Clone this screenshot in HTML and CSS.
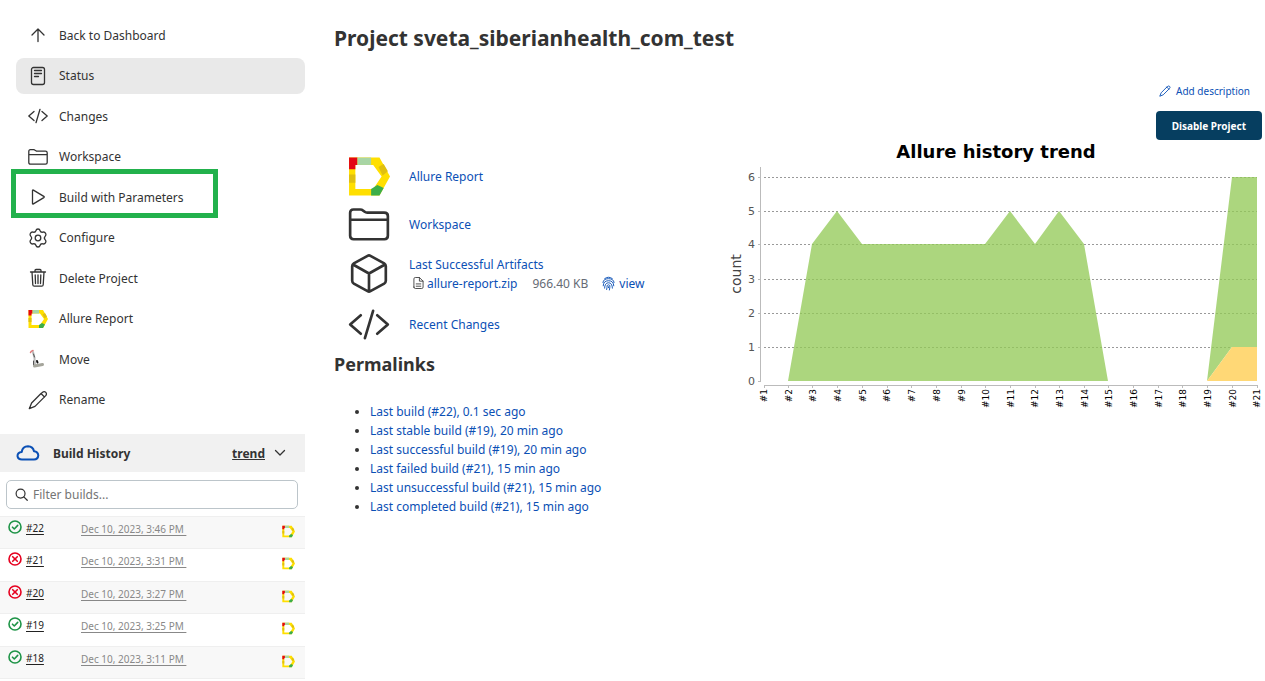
FILE: index.html
```html
<!DOCTYPE html>
<html lang="en">
<head>
<meta charset="utf-8">
<title>sveta_siberianhealth_com_test [Jenkins]</title>
<link rel="stylesheet" href="styles.css">
</head>
<body>
<svg class="defs" aria-hidden="true">
  <symbol id="up" viewBox="0 0 20 20"><path d="M10 16.500V4M4 10 10 4 16 10"/></symbol>
  <symbol id="doc" viewBox="0 0 20 20"><rect x="3.500" y="1.500" width="13" height="17" rx="2"/><path d="M6.500 4.500h7M6.500 7.500h7M6.500 10.500h4"/></symbol>
  <symbol id="code" viewBox="0 0 20 20"><path d="M6 5.500.800 10 6 14.500M14 5.500l5.200 4.500-5.200 4.500M12 3.300 8 16.700"/></symbol>
  <symbol id="folder" viewBox="0 0 20 20"><path d="M.800 15.500V4.300Q.800 2.700 2.400 2.700h3.300q.8 0 1.400.5l.8.600q.5.400 1.200.4h8.300q1.800 0 1.800 1.600v9.700q0 1.700-1.700 1.700H2.500q-1.700 0-1.700-1.700zM.800 7.700h18.400"/></symbol>
  <symbol id="play" viewBox="0 0 20 20"><path d="M4.500 3.600v12.800q0 1 .9.500l10.400-6.300q.9-.6 0-1.200L5.400 3.100q-.9-.5-.9.500z"/></symbol>
  <symbol id="gear" viewBox="0 0 20 20"><circle cx="10" cy="10" r="2.800"/><path d="M8 2.500Q8.300 1 10 1t2 1.500q.7 2.200 3 1.600 1.600-.4 2.600 1.200.9 1.800-.3 2.800-1.900 1.900 0 3.800 1.200 1 .3 2.800-1 1.600-2.600 1.200-2.300-.6-3 1.600Q11.700 19 10 19t-2-1.500q-.7-2.200-3-1.600-1.600.4-2.600-1.200-.9-1.800.3-2.800 1.900-1.900 0-3.800-1.200-1-.3-2.800 1-1.600 2.600-1.200 2.300.6 3-1.600z"/></symbol>
  <symbol id="trash" viewBox="0 0 20 20"><path d="M2.500 4h15M4 4l.8 12.700q.1 1.500 1.500 1.500h7.400q1.400 0 1.500-1.500L16 4M7 4V2.500q0-1 1-1h4q1 0 1 1V4M7.200 7l.3 8.500M10 7v8.500M12.800 7l-.3 8.500"/></symbol>
  <symbol id="pencil" viewBox="0 0 20 20"><path d="M13 3.500 3.600 13 1.300 18.700 7 16.400 17.500 5.900q1.700-1.900.3-3.500-1.600-1.500-3.500.1L13 3.500zM13 3.500 16.500 7"/></symbol>
  <symbol id="cube" viewBox="0 0 20 20"><path d="M9.300 1.400q.7-.4 1.400 0l6.700 3.700q.8.500.8 1.400v7q0 .9-.8 1.400l-6.700 3.700q-.7.400-1.400 0l-6.700-3.700q-.8-.5-.8-1.400v-7q0-.9.8-1.400zM2.200 5.600 10 10l7.800-4.400M10 10v8.700"/></symbol>
  <symbol id="cloud" viewBox="0 0 24 18"><path d="M6 15.500q-4 0-4.500-3.500 0-3.600 4.200-4Q6.500 2.500 12 2.300q5 .2 6 5 4 .3 4.300 4.100-.3 4-4.300 4.100z"/></symbol>
  <symbol id="search" viewBox="0 0 14 14"><circle cx="6" cy="6" r="4.800"/><path d="m9.500 9.500 3.700 3.700"/></symbol>
  <symbol id="page" viewBox="0 0 12 14"><path d="M1 11.500v-9Q1 1 2.500 1H7l4 4v6.500q0 1.500-1.500 1.500h-7Q1 13 1 11.500zM7 1v4h4M3.500 8h5M3.500 10.500h5"/></symbol>
  <symbol id="print" viewBox="0 0 14 16"><path d="M2.800 2.800Q7-.5 11.200 2.800M1 7q.5-4.200 6-4.200T13 7M1.300 10.500Q1.500 5 7 5t5.700 5.500M2.800 13Q3 7.200 7 7.200t4.200 5.800M5 14.500q.5-2 .5-4Q5.800 9.400 7 9.400t1.500 1.100q0 2-.5 4.500M7 11.500v1"/></symbol>
  <symbol id="ok" viewBox="0 0 14 14"><circle cx="7" cy="7" r="6"/><path d="m4.500 7.200 1.800 1.800 3.400-3.600"/></symbol>
  <symbol id="bad" viewBox="0 0 14 14"><circle cx="7" cy="7" r="6"/><path d="m4.700 4.700 4.600 4.600m0-4.600L4.700 9.300"/></symbol>
  <symbol id="allure" viewBox="0 0 40 38">
    <path fill="#ffdf00" stroke="none" d="M1 1h29l10 18-10 18H1zM7 8v23h17l8-12-8-11z" fill-rule="evenodd"/>
    <path fill="#e30613" stroke="none" d="M1 1h8v7H7v4H1z"/><path fill="#a8d5a5" stroke="none" d="M9 1h13v7H9z"/>
    <path fill="#e0c010" stroke="none" d="M1 17h6v8H1zM29 10l5-3 4 7-5 4z"/><path fill="#3cae49" stroke="none" d="M22 31l6-4 6 3-4 7h-8z"/>
  </symbol>
  <symbol id="mover" viewBox="0 0 20 20">
    <path stroke="#bbb" stroke-width="2" d="M5 3 6.500 9l.5 7"/><path stroke="#555" stroke-width="1" d="m5.500 5 1 3M5.500 12v4"/>
    <path stroke="#d77" stroke-width="1.500" d="M2.500 3.500Q3 2 5 1.500"/><path stroke="#a5a59c" stroke-width="3" d="m6.500 17 8-1.500"/><path stroke="#111" stroke-width="2" d="m9 12 .5 1.500"/>
  </symbol>
</svg>
<div class="page">
  <aside class="side">
    <nav class="tasks">
      <a class="task" href="#"><svg class="icon"><use href="#up"/></svg>Back to Dashboard</a>
      <a class="task task-active" href="#"><svg class="icon"><use href="#doc"/></svg>Status</a>
      <a class="task" href="#"><svg class="icon"><use href="#code"/></svg>Changes</a>
      <a class="task" href="#"><svg class="icon"><use href="#folder"/></svg>Workspace</a>
      <a class="task task-marked" href="#"><svg class="icon"><use href="#play"/></svg>Build with Parameters</a>
      <a class="task" href="#"><svg class="icon"><use href="#gear"/></svg>Configure</a>
      <a class="task" href="#"><svg class="icon"><use href="#trash"/></svg>Delete Project</a>
      <a class="task" href="#"><svg class="icon"><use href="#allure"/></svg>Allure Report</a>
      <a class="task" href="#"><svg class="icon"><use href="#mover"/></svg>Move</a>
      <a class="task" href="#"><svg class="icon"><use href="#pencil"/></svg>Rename</a>
    </nav>
    <section class="history">
      <header class="history-head">
        <svg class="cloud"><use href="#cloud"/></svg>
        <h2 class="history-title">Build History</h2>
        <a class="trend" href="#">trend</a>
        <svg class="chevron" viewBox="0 0 10 6"><path d="m.500.500 4.500 4.500L9.500.500"/></svg>
      </header>
      <label class="filter"><svg class="filter-icon"><use href="#search"/></svg><input class="filter-input" type="text" placeholder="Filter builds..." aria-label="Filter builds"></label>
      <table class="builds">
        <tr><td class="build-no"><svg class="state ok"><use href="#ok"/></svg><a href="#">#22</a></td><td class="build-date"><a href="#">Dec 10, 2023, 3:46 PM&nbsp;</a></td><td class="build-report"><svg class="mini"><use href="#allure"/></svg></td></tr>
        <tr><td class="build-no"><svg class="state bad"><use href="#bad"/></svg><a href="#">#21</a></td><td class="build-date"><a href="#">Dec 10, 2023, 3:31 PM&nbsp;</a></td><td class="build-report"><svg class="mini"><use href="#allure"/></svg></td></tr>
        <tr><td class="build-no"><svg class="state bad"><use href="#bad"/></svg><a href="#">#20</a></td><td class="build-date"><a href="#">Dec 10, 2023, 3:27 PM&nbsp;</a></td><td class="build-report"><svg class="mini"><use href="#allure"/></svg></td></tr>
        <tr><td class="build-no"><svg class="state ok"><use href="#ok"/></svg><a href="#">#19</a></td><td class="build-date"><a href="#">Dec 10, 2023, 3:25 PM&nbsp;</a></td><td class="build-report"><svg class="mini"><use href="#allure"/></svg></td></tr>
        <tr><td class="build-no"><svg class="state ok"><use href="#ok"/></svg><a href="#">#18</a></td><td class="build-date"><a href="#">Dec 10, 2023, 3:11 PM&nbsp;</a></td><td class="build-report"><svg class="mini"><use href="#allure"/></svg></td></tr>
      </table>
    </section>
  </aside>
  <main class="main">
    <h1 class="title">Project sveta_siberianhealth_com_test</h1>
    <div class="columns">
      <div class="content">
        <div class="row"><svg class="big"><use href="#allure"/></svg><a href="#">Allure Report</a></div>
        <div class="row"><svg class="big"><use href="#folder"/></svg><a href="#">Workspace</a></div>
        <div class="row row-tall"><svg class="big"><use href="#cube"/></svg>
          <div class="artifacts"><a href="#">Last Successful Artifacts</a>
            <div class="files"><a class="file" href="#"><svg class="page-icon"><use href="#page"/></svg>allure-report.zip</a><span class="size">966.40 KB</span><a class="view" href="#"><svg class="print"><use href="#print"/></svg>view</a></div>
          </div></div>
        <div class="row row-tall"><svg class="big"><use href="#code"/></svg><a href="#">Recent Changes</a></div>
        <h2 class="subtitle">Permalinks</h2>
        <ul class="links">
          <li><a href="#">Last build (#22), 0.1 sec ago</a></li>
          <li><a href="#">Last stable build (#19), 20 min ago</a></li>
          <li><a href="#">Last successful build (#19), 20 min ago</a></li>
          <li><a href="#">Last failed build (#21), 15 min ago</a></li>
          <li><a href="#">Last unsuccessful build (#21), 15 min ago</a></li>
          <li><a href="#">Last completed build (#21), 15 min ago</a></li>
        </ul>
      </div>
      <div class="aside">
        <a class="describe" href="#"><svg class="describe-icon"><use href="#pencil"/></svg>Add description</a>
        <button class="disable" type="button">Disable Project</button>
        <svg class="chart" viewBox="0 0 532 270" role="img" aria-label="Allure history trend">
          <text class="chart-title" x="266" y="18" text-anchor="middle">Allure history trend</text>
          <path class="grid-lines" d="M34 37.500H527M34 71.500H527M34 104.500H527M34 139.500H527M34 173.500H527M34 207.500H527"/>
          <path fill="#92c956" fill-opacity=".76" d="M58 241 82 104 107 71 132 104H255L280 71 305 104 329 71 354 104 378 241zM477 241 502 37H527V207H502z"/>
          <path fill="#ffd876" d="M477 241 502 207H527V241z"/>
          <path class="axis" d="M30.500 27V241.500M28 37.500h3M28 71.500h3M28 104.500h3M28 139.500h3M28 173.500h3M28 207.500h3M28 241.500h3M34 245.500H527M34.500 245v3M58.500 245v3M82.500 245v3M107.500 245v3M132.500 245v3M157.500 245v3M181.500 245v3M206.500 245v3M231.500 245v3M255.500 245v3M280.500 245v3M305.500 245v3M329.500 245v3M354.500 245v3M378.500 245v3M403.500 245v3M428.500 245v3M452.500 245v3M477.500 245v3M502.500 245v3M527.500 245v3"/>
          <g class="y-labels"><text x="25" y="41">6</text><text x="25" y="75">5</text><text x="25" y="108">4</text><text x="25" y="143">3</text><text x="25" y="177">2</text><text x="25" y="211">1</text><text x="25" y="245">0</text></g>
          <text class="count" transform="translate(11 134) rotate(-90)">count</text>
          <g class="x-labels">
            <text transform="translate(37 249) rotate(-90)">#1</text><text transform="translate(62 249) rotate(-90)">#2</text><text transform="translate(86 249) rotate(-90)">#3</text><text transform="translate(111 249) rotate(-90)">#4</text><text transform="translate(136 249) rotate(-90)">#5</text><text transform="translate(160 249) rotate(-90)">#6</text><text transform="translate(185 249) rotate(-90)">#7</text><text transform="translate(210 249) rotate(-90)">#8</text><text transform="translate(235 249) rotate(-90)">#9</text><text transform="translate(259 249) rotate(-90)">#10</text><text transform="translate(284 249) rotate(-90)">#11</text><text transform="translate(308 249) rotate(-90)">#12</text><text transform="translate(333 249) rotate(-90)">#13</text><text transform="translate(358 249) rotate(-90)">#14</text><text transform="translate(382 249) rotate(-90)">#15</text><text transform="translate(407 249) rotate(-90)">#16</text><text transform="translate(432 249) rotate(-90)">#17</text><text transform="translate(456 249) rotate(-90)">#18</text><text transform="translate(481 249) rotate(-90)">#19</text><text transform="translate(506 249) rotate(-90)">#20</text><text transform="translate(530 249) rotate(-90)">#21</text>
          </g>
        </svg>
      </div>
    </div>
  </main>
</div>
</body>
</html>
```
FILE: styles.css
```css
*, *::after { box-sizing: border-box; }
body { margin: 0; background: #fff; color: #333; font: 12px/19px "Noto Sans", "Open Sans", sans-serif; }
a { color: #0b50b5; text-decoration: none; }
svg { fill: none; stroke: currentColor; stroke-linecap: round; stroke-linejoin: round; flex: none; }
.defs { display: none; }
.page { display: flex; align-items: flex-start; }

.side { width: 305px; flex: none; }
.tasks { display: flex; flex-direction: column; justify-content: space-between; min-height: 418px; padding: 17px 0 0 16px; }
.task { position: relative; display: flex; align-items: center; gap: 11px; height: 36px; padding-left: 12px; border-radius: 8px; color: #333; }
.task-active { background: #e9e9e9; }
.task-marked::after { content: ""; position: absolute; top: -10px; left: -5px; width: 207px; height: 49px; border: 5px solid #22b14c; }
.icon { width: 20px; height: 20px; stroke-width: 1.300px; }

.history { margin-top: 16px; }
.history-head { display: flex; align-items: center; height: 38px; padding: 0 20px 0 16px; background: #f1f1f1; }
.cloud { width: 24px; height: 18px; margin-right: 13px; color: #0b50b5; stroke-width: 2px; }
.history-title { flex: 1; margin: 0; font-size: 12px; }
.trend { margin-right: 10px; color: #333; font-weight: 700; text-decoration: underline; }
.chevron { width: 10px; height: 6px; stroke-width: 1.300px; overflow: visible; }
.filter { display: flex; align-items: center; gap: 5px; height: 29px; margin: 8px 7px 7px 6px; padding: 0 8px; border: 1px solid #bcc5ca; border-radius: 5px; }
.filter-icon { width: 13px; height: 13px; stroke-width: 1.300px; }
.filter-input { flex: 1; min-width: 0; padding: 0; border: 0; outline: 0; background: none; color: #333; font: inherit; }
.filter-input::placeholder { color: #757575; }
.builds { width: 100%; height: 163px; border-collapse: collapse; font-size: 10px; line-height: 16px; }
.builds tr { border-top: 1px solid #efefef; border-bottom: 1px solid #efefef; }
.builds tr:nth-child(odd) { background: #f8f8f8; }
.builds td { padding: 3px 0 0; vertical-align: top; }
.builds a { text-decoration: underline; text-underline-offset: 2px; }
.build-no { width: 81px; }
.build-no a { color: #222; vertical-align: top; }
.state { width: 14px; height: 14px; margin: 0 4px 0 8px; stroke-width: 1.600px; }
.ok { color: #1e9447; }
.bad { color: #e6001f; }
.builds .build-date { padding-top: 4px; }
.build-date a { color: #888; }
.builds .build-report { padding: 8px 10px 0 0; text-align: right; }
.mini { width: 13px; height: 13px; }

.main { flex: 1; min-width: 0; padding: 23px 3px 0 29px; }
.title { margin: 0; font-size: 21px; line-height: 30px; }
.columns { display: flex; justify-content: space-between; padding-top: 29px; }
.content { padding-top: 70px; }
.row { display: flex; align-items: center; gap: 19px; height: 48px; padding-left: 14px; }
.row-tall { height: 51px; }
.big { width: 42px; height: 41px; stroke-width: 1.300px; }
.files { display: flex; align-items: center; padding-left: 4px; }
.file { display: flex; align-items: center; gap: 3px; }
.page-icon { width: 11px; height: 14px; color: #444; }
.size { margin: 0 14px 0 15px; color: #666b75; }
.view { display: flex; align-items: center; gap: 4px; }
.print { width: 13px; height: 15px; stroke-width: 1px; }
.subtitle { margin: 1px 0 25px; font-size: 18px; line-height: 26px; }
.links { margin: 0; padding-left: 36px; }

.aside { display: flex; flex-direction: column; align-items: flex-end; width: 532px; flex: none; }
.describe { display: flex; align-items: center; gap: 5px; margin-right: 12px; font-size: 10px; line-height: 18px; }
.describe-icon { width: 12px; height: 12px; stroke-width: 1.500px; }
.disable { height: 29px; margin-top: 11px; padding: 0 16px; border: 0; border-radius: 4px; background: #063e60; color: #fff; font: 700 10px/16px "Noto Sans", sans-serif; }
.chart { width: 100%; height: auto; overflow: visible; }
.chart text { stroke: none; font-family: "DejaVu Sans", sans-serif; }
.chart-title { fill: #000; font-size: 18px; font-weight: 700; }
.grid-lines { stroke: #999; stroke-dasharray: 2 2; stroke-linecap: butt; }
.chart path:not(.grid-lines):not(.axis) { stroke: none; }
.axis { stroke: #bbb; stroke-linecap: butt; }
.y-labels { fill: #555; font-size: 11px; text-anchor: end; }
.count { fill: #444; font-size: 14px; text-anchor: middle; }
.x-labels { fill: #000; font-size: 9px; text-anchor: end; }
```
